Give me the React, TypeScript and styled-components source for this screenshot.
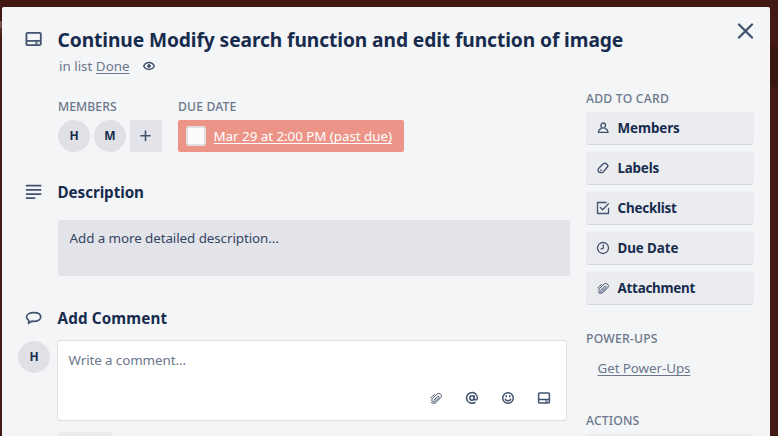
import React from "react";
import styled, { createGlobalStyle } from "styled-components";

const GlobalStyle = createGlobalStyle`
  * { box-sizing: border-box; }
  html, body { margin: 0; padding: 0; }
  body {
    width: 778px;
    height: 436px;
    overflow: hidden;
    background: #421a13;
    font-family: "Noto Sans", "Open Sans", sans-serif;
    font-size: 13.4px;
    line-height: 20px;
    color: #172b4d;
  }
`;

const Screen = styled.div`
  width: 778px;
  height: 436px;
  padding: 7px 8px 0 2px;
  overflow: hidden;
  background:
    linear-gradient(#381610, #381610) 770px 47px / 8px 40px no-repeat,
    linear-gradient(#6d4f4b, #6d4f4b) 0 21px / 2px 7px no-repeat,
    linear-gradient(#5a2b26, #421a13) 0 28px / 2px 12px no-repeat,
    #421a13;
`;

const Card = styled.div`
  width: 768px;
  height: 480px;
  background: #f4f5f7;
  border-radius: 2px;
`;

const Header = styled.header`
  height: 73px;
  display: flex;
  padding: 17px 16px 0 23px;
`;

const HeaderText = styled.div`
  flex: 1;
  padding-left: 15.5px;
`;

const Title = styled.h1`
  margin: 0;
  font-size: 19.2px;
  font-weight: 700;
  line-height: 32px;
  letter-spacing: -0.09px;
  white-space: nowrap;
`;

const SubLine = styled.div`
  display: flex;
  align-items: center;
  height: 20px;
  padding-left: 1.5px;
  gap: 12.5px;
  color: #6b778c;
`;

const HeaderIcon = styled.div`
  width: 17px;
  padding-top: 7px;
  color: #42526e;
`;

const CloseIcon = styled.div`
  color: #42526e;
  height: 16px;
  margin-top: -1px;
`;

const Body = styled.div`
  display: grid;
  grid-template-columns: 512px 168px;
  column-gap: 16px;
  padding-left: 56px;
`;

const Main = styled.main`
  padding-top: 16px;
`;

const Details = styled.div`
  display: flex;
  gap: 16px;
  height: 80px;
`;

const Label = styled.h3<{ $track?: number }>`
  margin: 0;
  height: 20px;
  font-size: 12.2px;
  font-weight: 500;
  line-height: 22px;
  letter-spacing: ${(p) => p.$track ?? 0.05}px;
  color: #6b778c;
  white-space: nowrap;
`;

const Chips = styled.div`
  display: flex;
  gap: 4px;
  margin-top: 4px;
`;

const Avatar = styled.div`
  width: 32px;
  height: 32px;
  border-radius: 50%;
  background: #dfe1e6;
  font-size: 12px;
  font-weight: 700;
  line-height: 32px;
  text-align: center;
`;

const AddMember = styled.button`
  width: 32px;
  height: 32px;
  padding: 0;
  border: 0;
  border-radius: 2px;
  background: #e2e4e9;
  color: #42526e;
  display: grid;
  place-items: center;
`;

const DueBadge = styled.div`
  display: flex;
  align-items: center;
  width: 226px;
  height: 32px;
  margin-top: 4px;
  padding-left: 8px;
  gap: 7.5px;
  border-radius: 2px;
  background: #ec9488;
  color: #fff;
`;

const Checkbox = styled.span`
  width: 20px;
  height: 20px;
  border: 2px solid #dfe1e6;
  border-radius: 3px;
  background: #fafbfc;
`;

const Underlined = styled.span<{ $track?: number }>`
  text-decoration: underline;
  text-decoration-thickness: 1px;
  text-underline-offset: 2px;
  text-decoration-skip-ink: none;
  letter-spacing: ${(p) => p.$track ?? 0}px;
  white-space: nowrap;
`;

const Plain = styled.span<{ $track?: number }>`
  letter-spacing: ${(p) => p.$track ?? 0}px;
  white-space: nowrap;
`;

const SectionHead = styled.div`
  display: flex;
  align-items: center;
  gap: 15.5px;
  height: 32px;
  margin-left: -33px;
  color: #42526e;
`;

const SectionTitle = styled.h2<{ $track?: number }>`
  margin: 0;
  font-size: 15.2px;
  font-weight: 700;
  line-height: 32px;
  color: #172b4d;
  letter-spacing: ${(p) => p.$track ?? 0}px;
`;

const DescriptionBox = styled.div`
  height: 56px;
  margin: 12px 0 26px;
  padding: 8px 11.5px;
  border-radius: 3px;
  background: #e2e4ea;
  color: #344563;
`;

const CommentRow = styled.div`
  display: flex;
  gap: 8px;
  margin: 7px 0 0 -40px;
`;

const CommentBox = styled.div`
  width: 508px;
  height: 79px;
  display: flex;
  flex-direction: column;
  justify-content: space-between;
  padding: 9px 15.5px 15px 10.5px;
  border-radius: 3px;
  background: #fff;
  box-shadow: 0 0 0 1px #dfe1e6, 0 1px 1px 0 #c1c7d0;
  color: #6b778c;
`;

const Tools = styled.div`
  display: flex;
  justify-content: flex-end;
  gap: 22px;
  color: #42526e;
`;

const SaveButton = styled.div`
  width: 54px;
  height: 32px;
  margin-top: 12px;
  border-radius: 3px;
  background: #ebecf0;
`;

const Sidebar = styled.aside`
  padding-top: 8px;
`;

const Actions = styled.div`
  display: flex;
  flex-direction: column;
  gap: 8px;
  margin-top: 4px;
`;

const ActionButton = styled.button<{ $track?: number }>`
  display: flex;
  align-items: center;
  gap: 7.5px;
  width: 168px;
  height: 32px;
  flex: none;
  padding: 0 0 0 10px;
  border: 0;
  border-radius: 3px;
  background: #ebecf0;
  box-shadow: 0 1px 0 0 #d3d7df;
  font: 700 13.4px/32px "Noto Sans", "Open Sans", sans-serif;
  letter-spacing: ${(p) => p.$track ?? 0}px;
  color: #172b4d;

  svg { color: #42526e; }
`;

const PowerUps = styled.section`
  height: 106px;
  padding-top: 24px;
`;

const PowerUpLink = styled.div`
  padding: 10px 0 0 11.5px;
  color: #6b778c;
`;

type IconProps = { size?: number; sw?: number };

const Svg = ({ size = 14, children, sw = 1.5 }: React.PropsWithChildren<IconProps>) => (
  <svg width={size} height={size} viewBox="0 0 14 14" fill="none" stroke="currentColor"
    strokeWidth={sw} strokeLinecap="round" strokeLinejoin="round">
    {children}
  </svg>
);

const CardIcon = () => (
  <svg width="17" height="17" viewBox="0 0 17 17" fill="none">
    <rect x="1.4" y="1.9" width="14.4" height="12.2" rx="1.2" stroke="currentColor" strokeWidth="1.8" />
    <path d="M1.5 9.9H15.5" stroke="currentColor" strokeWidth="1.7" />
    <path d="M11 9.9V14M10.8 12H13.2" stroke="currentColor" strokeWidth="1" />
  </svg>
);

const CardIconSmall = () => (
  <Svg>
    <rect x="1.6" y="2.1" width="10.8" height="9.8" rx=".8" />
    <path d="M1.6 8.5H12.4" strokeWidth="1.4" />
    <path d="M9 8.6V11.4M9 10.2H10.8" strokeWidth=".8" />
  </Svg>
);

const EyeIcon = () => (
  <svg width="14" height="12" viewBox="0 0 14 12" fill="none" stroke="#42526e">
    <path d="M1.7 6C2.8 3.7 4.7 2.6 7 2.6S11.2 3.7 12.3 6C11.2 8.3 9.3 9.4 7 9.4S2.8 8.3 1.7 6Z" strokeWidth="1.5" />
    <circle cx="7" cy="6" r="1.5" fill="#42526e" strokeWidth=".8" />
  </svg>
);

const LinesIcon = () => (
  <svg width="17" height="16" viewBox="0 0 17 16" stroke="currentColor" strokeWidth="1.8" strokeLinecap="round">
    <path d="M1.6 1.7H15.6M1.6 5.9H15.6M1.6 10.1H15.6M1.6 14.1H9.6" />
  </svg>
);

const CommentIcon = () => (
  <svg width="17" height="16" viewBox="0 0 17 16" fill="none" stroke="currentColor" strokeWidth="1.7" strokeLinejoin="round">
    <path d="M3.9 10.5C2.4 9.6 1.5 8.5 1.5 7.2C1.5 4.5 4.6 2.7 8.6 2.7S15.7 4.3 15.7 7S12.6 11.3 8.8 11.3C8 11.3 7.5 11.3 6.8 11.2L3.5 13.4Z" />
  </svg>
);

const CrossIcon = () => (
  <svg width="17" height="16" viewBox="0 0 17 16" stroke="currentColor" strokeWidth="2.3" strokeLinecap="round">
    <path d="M2 1.5L15 14.5M15 1.5L2 14.5" />
  </svg>
);

const PlusIcon = () => (
  <svg width="12" height="12" viewBox="0 0 12 12" stroke="currentColor" strokeWidth="1.6" strokeLinecap="round">
    <path d="M5.5 1V10.4M.9 5.7H10.1" />
  </svg>
);

const MemberIcon = () => (
  <Svg sw={1.3}>
    <ellipse cx="7.2" cy="4.6" rx="2.3" ry="2.6" />
    <path d="M5.2 7.6C3.4 8 2.5 9.4 2.4 11.4H12C11.9 9.4 11 8 9.2 7.6" />
  </Svg>
);

const TagIcon = () => (
  <Svg sw={1.4}>
    <path d="M7 3L8.3 2.3Q9 2 9.7 2.4L11.6 4Q12.3 4.8 11.6 5.8L7.3 10.9Q6.6 11.7 5.6 11.6L3.2 11.3Q2.4 11.1 2.3 10.2L2.2 8.5Q2.2 7.8 2.8 7.3Z" />
    <circle cx="4.9" cy="9.1" r=".4" strokeWidth=".8" />
  </Svg>
);

const CheckIcon = () => (
  <Svg sw={1.3}>
    <path d="M10 1.5H1.5V12.5H12.5V7.4" />
    <path d="M4.3 6.5L6.7 8.8L12.5 2.6" />
  </Svg>
);

const ClockIcon = () => (
  <Svg sw={1.3}>
    <circle cx="7" cy="7" r="5.5" />
    <path d="M7.3 3.9V7.1L5.1 8.1" />
  </Svg>
);

const ClipIcon = () => (
  <Svg sw={1}>
    <path d="M5 9.2L8.7 5.6C9.7 4.8 10.7 5.8 9.8 6.8L6.3 10.4C4.4 12.1 1.5 9.9 3.2 7.9L7.9 3.2C10.2 1.1 13.8 4 11.8 6.5L6.9 11.6C5.6 12.6 3.5 12.7 2.4 11.6" />
    <path d="M1.8 7L5.4 3.4M5 9.2L6.8 7.4" />
  </Svg>
);

const AtIcon = () => (
  <Svg sw={1.5}>
    <circle cx="7" cy="7" r="2.2" />
    <path d="M9.3 4.9V7.7C9.3 9.5 12.4 9.6 12.4 6.9A5.4 5.4 0 1 0 9.9 11.5" />
  </Svg>
);

const SmileIcon = () => (
  <Svg sw={1.5}>
    <circle cx="7" cy="7" r="5.3" />
    <path d="M4.4 8.2C5 10.2 9 10.2 9.6 8.2M5.3 4.8V5.7M8.7 4.8V5.7" />
  </Svg>
);

const ACTIONS = [
  { name: "Members", icon: <MemberIcon />, track: -0.1 },
  { name: "Labels", icon: <TagIcon />, track: -0.2 },
  { name: "Checklist", icon: <CheckIcon />, track: -0.2 },
  { name: "Due Date", icon: <ClockIcon />, track: -0.1 },
  { name: "Attachment", icon: <ClipIcon />, track: -0.25 },
];

export default function App() {
  return (
    <Screen>
      <GlobalStyle />
      <Card>
        <Header>
          <HeaderIcon><CardIcon /></HeaderIcon>
          <HeaderText>
            <Title>Continue Modify search function and edit function of image</Title>
            <SubLine>
              <Plain>in list <Underlined>Done</Underlined></Plain>
              <EyeIcon />
            </SubLine>
          </HeaderText>
          <CloseIcon><CrossIcon /></CloseIcon>
        </Header>
        <Body>
          <Main>
            <Details>
              <div>
                <Label>MEMBERS</Label>
                <Chips>
                  <Avatar>H</Avatar>
                  <Avatar>M</Avatar>
                  <AddMember aria-label="Add member"><PlusIcon /></AddMember>
                </Chips>
              </div>
              <div>
                <Label $track={0.15}>DUE DATE</Label>
                <DueBadge>
                  <Checkbox />
                  <Underlined $track={-0.04}>Mar 29 at 2:00 PM (past due)</Underlined>
                </DueBadge>
              </div>
            </Details>
            <SectionHead>
              <LinesIcon />
              <SectionTitle $track={-0.06}>Description</SectionTitle>
            </SectionHead>
            <DescriptionBox><Plain $track={-0.08}>Add a more detailed description…</Plain></DescriptionBox>
            <SectionHead>
              <CommentIcon />
              <SectionTitle $track={0.15}>Add Comment</SectionTitle>
            </SectionHead>
            <CommentRow>
              <Avatar>H</Avatar>
              <CommentBox>
                <Plain $track={-0.1}>Write a comment…</Plain>
                <Tools>
                  <ClipIcon />
                  <AtIcon />
                  <SmileIcon />
                  <CardIconSmall />
                </Tools>
              </CommentBox>
            </CommentRow>
            <SaveButton />
          </Main>
          <Sidebar>
            <Label $track={0.22}>ADD TO CARD</Label>
            <Actions>
              {ACTIONS.map((a) => (
                <ActionButton key={a.name} $track={a.track}>{a.icon}{a.name}</ActionButton>
              ))}
            </Actions>
            <PowerUps>
              <Label $track={0.2}>POWER-UPS</Label>
              <PowerUpLink><Underlined $track={-0.08}>Get Power-Ups</Underlined></PowerUpLink>
            </PowerUps>
            <Label $track={0.15}>ACTIONS</Label>
            <Actions>
              <ActionButton />
            </Actions>
          </Sidebar>
        </Body>
      </Card>
    </Screen>
  );
}
